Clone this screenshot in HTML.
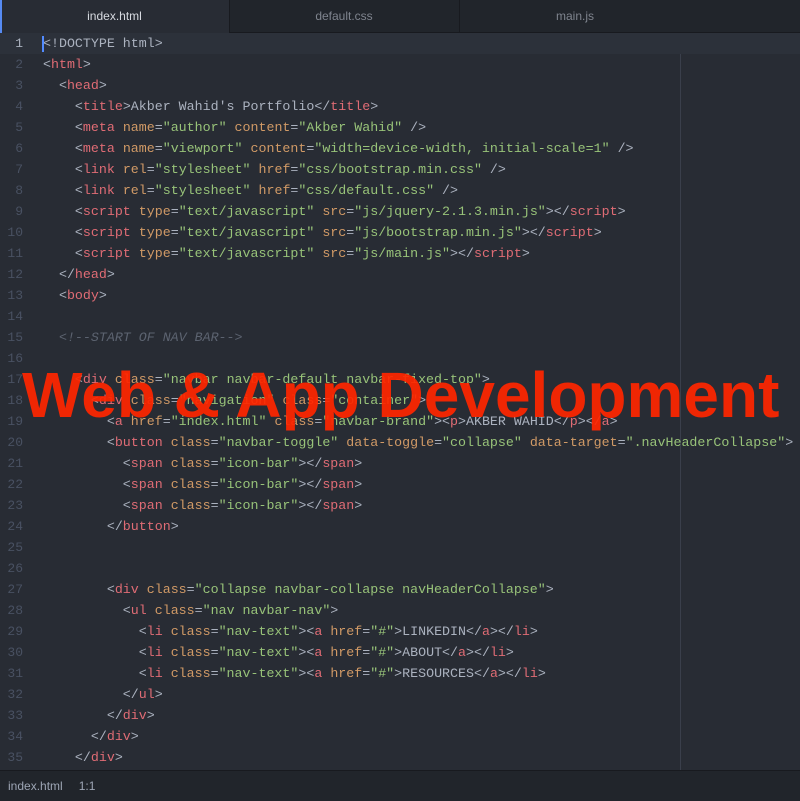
<!DOCTYPE html>
<html><head><style>
body{margin:0;width:800px;height:800px;background:#282c34;overflow:hidden;position:relative;font-family:"Liberation Sans",sans-serif}
.tabs{position:absolute;top:0;left:0;width:800px;height:32px;background:#21252b;border-bottom:1px solid #181a1f}
.tab{position:absolute;top:0;height:32px;line-height:33px;text-align:center;font-size:12px;color:#7f848e;border-right:1px solid #181a1f}
.tab.act{background:#282c34;color:#d7dae0;height:33px;box-shadow:inset 2px 0 0 #568af2}
.code{position:absolute;top:33px;left:0;width:800px}
.ln{height:21px;line-height:21px;font-family:"Liberation Mono",monospace;font-size:13.3px;white-space:pre;color:#abb2bf;position:relative}
.ln.cur{background:#2c313a}
.g{display:inline-block;width:43px;text-align:right;padding-right:20px;box-sizing:border-box;color:#495162;font-size:13px}
.cur .g{color:#abb2bf}
.t{color:#e06c75}.a{color:#d19a66}.s{color:#98c379}.c{color:#5c6370;font-style:italic}
.ruler{position:absolute;left:680px;top:33px;width:1px;height:737px;background:#3a3f4b}
.status{position:absolute;left:0;top:770px;width:800px;height:30px;background:#21252b;border-top:1px solid #181a1f;font-size:12px;color:#9da5b4;line-height:30px}
.big{position:absolute;left:22px;top:358px;font-weight:bold;font-size:64px;color:rgba(255,38,0,0.93);white-space:nowrap;letter-spacing:0}
.caret{position:absolute;left:42px;top:36px;width:2px;height:16px;background:#528bff}
</style></head><body>
<div class="tabs">
<div class="tab act" style="left:0;width:229px">index.html</div>
<div class="tab" style="left:229px;width:230px">default.css</div>
<div class="tab" style="left:460px;width:230px;border-right:none">main.js</div>
</div>
<div class="ruler"></div>
<div class="code">
<div class="ln cur"><span class="g">1</span>&lt;!DOCTYPE html&gt;</div>
<div class="ln"><span class="g">2</span>&lt;<span class="t">html</span>&gt;</div>
<div class="ln"><span class="g">3</span>  &lt;<span class="t">head</span>&gt;</div>
<div class="ln"><span class="g">4</span>    &lt;<span class="t">title</span>&gt;Akber Wahid's Portfolio&lt;/<span class="t">title</span>&gt;</div>
<div class="ln"><span class="g">5</span>    &lt;<span class="t">meta</span> <span class="a">name</span>=<span class="s">"author"</span> <span class="a">content</span>=<span class="s">"Akber Wahid"</span> /&gt;</div>
<div class="ln"><span class="g">6</span>    &lt;<span class="t">meta</span> <span class="a">name</span>=<span class="s">"viewport"</span> <span class="a">content</span>=<span class="s">"width=device-width, initial-scale=1"</span> /&gt;</div>
<div class="ln"><span class="g">7</span>    &lt;<span class="t">link</span> <span class="a">rel</span>=<span class="s">"stylesheet"</span> <span class="a">href</span>=<span class="s">"css/bootstrap.min.css"</span> /&gt;</div>
<div class="ln"><span class="g">8</span>    &lt;<span class="t">link</span> <span class="a">rel</span>=<span class="s">"stylesheet"</span> <span class="a">href</span>=<span class="s">"css/default.css"</span> /&gt;</div>
<div class="ln"><span class="g">9</span>    &lt;<span class="t">script</span> <span class="a">type</span>=<span class="s">"text/javascript"</span> <span class="a">src</span>=<span class="s">"js/jquery-2.1.3.min.js"</span>&gt;&lt;/<span class="t">script</span>&gt;</div>
<div class="ln"><span class="g">10</span>    &lt;<span class="t">script</span> <span class="a">type</span>=<span class="s">"text/javascript"</span> <span class="a">src</span>=<span class="s">"js/bootstrap.min.js"</span>&gt;&lt;/<span class="t">script</span>&gt;</div>
<div class="ln"><span class="g">11</span>    &lt;<span class="t">script</span> <span class="a">type</span>=<span class="s">"text/javascript"</span> <span class="a">src</span>=<span class="s">"js/main.js"</span>&gt;&lt;/<span class="t">script</span>&gt;</div>
<div class="ln"><span class="g">12</span>  &lt;/<span class="t">head</span>&gt;</div>
<div class="ln"><span class="g">13</span>  &lt;<span class="t">body</span>&gt;</div>
<div class="ln"><span class="g">14</span></div>
<div class="ln"><span class="g">15</span>  <span class="c">&lt;!--START OF NAV BAR--&gt;</span></div>
<div class="ln"><span class="g">16</span></div>
<div class="ln"><span class="g">17</span>    &lt;<span class="t">div</span> <span class="a">class</span>=<span class="s">"navbar navbar-default navbar-fixed-top"</span>&gt;</div>
<div class="ln"><span class="g">18</span>      &lt;<span class="t">div</span> <span class="a">class</span>=<span class="s">"navigation"</span> <span class="a">class</span>=<span class="s">"container"</span>&gt;</div>
<div class="ln"><span class="g">19</span>        &lt;<span class="t">a</span> <span class="a">href</span>=<span class="s">"index.html"</span> <span class="a">class</span>=<span class="s">"navbar-brand"</span>&gt;&lt;<span class="t">p</span>&gt;AKBER WAHID&lt;/<span class="t">p</span>&gt;&lt;/<span class="t">a</span>&gt;</div>
<div class="ln"><span class="g">20</span>        &lt;<span class="t">button</span> <span class="a">class</span>=<span class="s">"navbar-toggle"</span> <span class="a">data-toggle</span>=<span class="s">"collapse"</span> <span class="a">data-target</span>=<span class="s">".navHeaderCollapse"</span>&gt;</div>
<div class="ln"><span class="g">21</span>          &lt;<span class="t">span</span> <span class="a">class</span>=<span class="s">"icon-bar"</span>&gt;&lt;/<span class="t">span</span>&gt;</div>
<div class="ln"><span class="g">22</span>          &lt;<span class="t">span</span> <span class="a">class</span>=<span class="s">"icon-bar"</span>&gt;&lt;/<span class="t">span</span>&gt;</div>
<div class="ln"><span class="g">23</span>          &lt;<span class="t">span</span> <span class="a">class</span>=<span class="s">"icon-bar"</span>&gt;&lt;/<span class="t">span</span>&gt;</div>
<div class="ln"><span class="g">24</span>        &lt;/<span class="t">button</span>&gt;</div>
<div class="ln"><span class="g">25</span></div>
<div class="ln"><span class="g">26</span></div>
<div class="ln"><span class="g">27</span>        &lt;<span class="t">div</span> <span class="a">class</span>=<span class="s">"collapse navbar-collapse navHeaderCollapse"</span>&gt;</div>
<div class="ln"><span class="g">28</span>          &lt;<span class="t">ul</span> <span class="a">class</span>=<span class="s">"nav navbar-nav"</span>&gt;</div>
<div class="ln"><span class="g">29</span>            &lt;<span class="t">li</span> <span class="a">class</span>=<span class="s">"nav-text"</span>&gt;&lt;<span class="t">a</span> <span class="a">href</span>=<span class="s">"#"</span>&gt;LINKEDIN&lt;/<span class="t">a</span>&gt;&lt;/<span class="t">li</span>&gt;</div>
<div class="ln"><span class="g">30</span>            &lt;<span class="t">li</span> <span class="a">class</span>=<span class="s">"nav-text"</span>&gt;&lt;<span class="t">a</span> <span class="a">href</span>=<span class="s">"#"</span>&gt;ABOUT&lt;/<span class="t">a</span>&gt;&lt;/<span class="t">li</span>&gt;</div>
<div class="ln"><span class="g">31</span>            &lt;<span class="t">li</span> <span class="a">class</span>=<span class="s">"nav-text"</span>&gt;&lt;<span class="t">a</span> <span class="a">href</span>=<span class="s">"#"</span>&gt;RESOURCES&lt;/<span class="t">a</span>&gt;&lt;/<span class="t">li</span>&gt;</div>
<div class="ln"><span class="g">32</span>          &lt;/<span class="t">ul</span>&gt;</div>
<div class="ln"><span class="g">33</span>        &lt;/<span class="t">div</span>&gt;</div>
<div class="ln"><span class="g">34</span>      &lt;/<span class="t">div</span>&gt;</div>
<div class="ln"><span class="g">35</span>    &lt;/<span class="t">div</span>&gt;</div>
</div>
<div class="caret"></div>
<div class="status"><span style="margin-left:8px">index.html</span><span style="margin-left:16px">1:1</span></div>
<div class="big">Web &amp; App Development</div>
</body></html>
